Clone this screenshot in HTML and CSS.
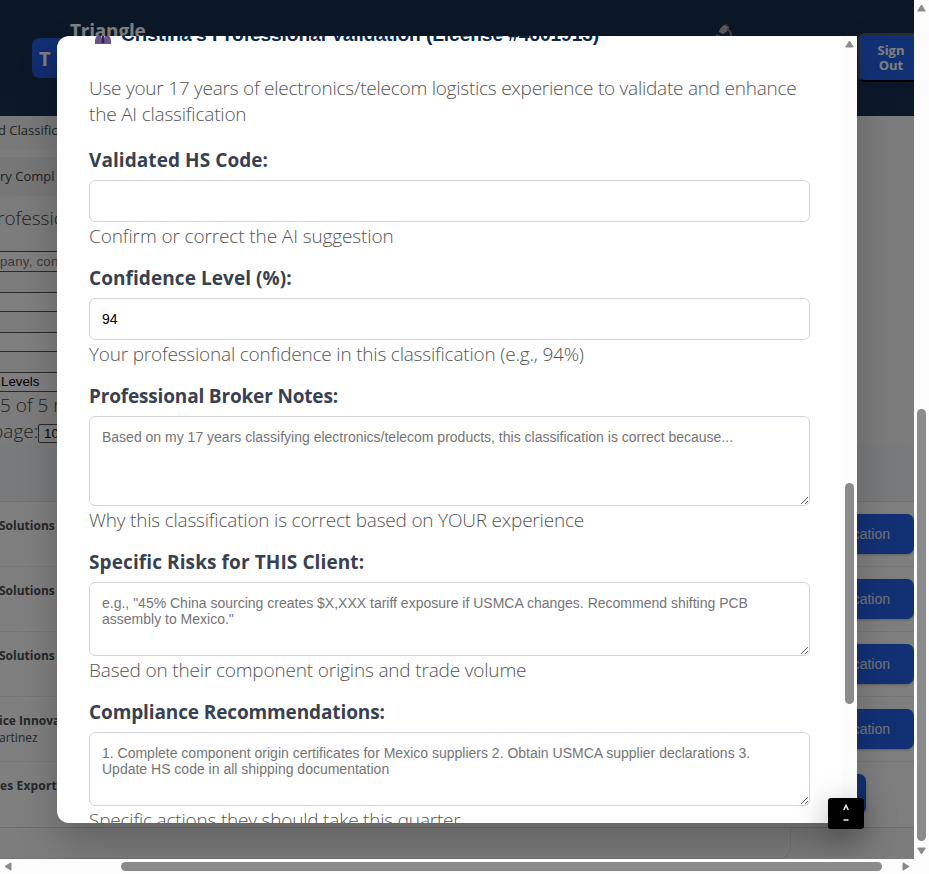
FILE: index.html
```html
<!DOCTYPE html>
<html lang="en">
<head>
<meta charset="utf-8">
<title>Triangle – Professional Validation</title>
<link rel="stylesheet" href="styles.css">
</head>
<body>
<div class="window">
  <div class="viewport">
    <header class="topbar">
      <div class="logo">T</div>
      <div class="brand">Triangle</div>
      <svg class="topicon" width="18" height="20" viewBox="0 0 18 20"><path d="M3 9Q4 4 9 1.500L13 4Q12 9 7 11Z" fill="#b8b4c2"/><path d="M9 1L12 3" stroke="#6b4a4a" stroke-width="2"/><path d="M11 6Q16 9 15 14" fill="none" stroke="#8b8590" stroke-width="2"/><path d="M0 11L5 13V16H0Z" fill="#3c9fc4"/></svg>
      <div class="signout">Sign Out</div>
    </header>
    <main class="page">
      <div class="tab tab-first"><span>d Classific</span></div>
      <div class="tab"><span>ry Compl</span></div>
      <div class="lead"><span>rofessic</span></div>
      <div class="filters">
        <div class="filter filter-search">pany, con</div>
        <div class="filter"></div>
        <div class="filter"></div>
        <div class="filter filter-level">Levels</div>
      </div>
      <div class="count">5 of 5 r</div>
      <div class="pager"><span>page:</span><div class="pagesize">10</div></div>
      <div class="thead"></div>
      <div class="row"><div class="client">Solutions</div><div class="action">cation</div></div>
      <div class="row"><div class="client">Solutions</div><div class="action">cation</div></div>
      <div class="row"><div class="client">Solutions</div><div class="action">cation</div></div>
      <div class="row"><div class="client">ice Innova<small>artinez</small></div><div class="action">cation</div></div>
      <div class="row row-last"><div class="client client-last">es Export</div><div class="action action-short"></div></div>
      <div class="cardfoot"></div>
    </main>
    <div class="overlay">
      <div class="modal">
        <div class="content">
          <h3 class="title"><svg class="person" width="16" height="10" viewBox="0 0 16 10"><path d="M0 10V6Q1 1 5 0H11Q15 1 16 6V10Z" fill="#6b5293"/><path d="M5 0L8 7L11 0Z" fill="#e4d9e9"/><path d="M7 1H9L9.5 9H6.5Z" fill="#3b2445"/></svg><span>Cristina's Professional Validation (License #4601913)</span></h3>
          <p class="intro"><span class="i1">Use your 17 years of electronics/telecom logistics experience to validate and enhance</span><br><span class="i2">the AI classification</span></p>
          <div class="field"><label class="l1">Validated HS Code:</label><input type="text"><p class="h1">Confirm or correct the AI suggestion</p></div>
          <div class="field"><label class="l2">Confidence Level (%):</label><input type="text" value="94"><p class="h2">Your professional confidence in this classification (e.g., 94%)</p></div>
          <div class="field"><label class="l3">Professional Broker Notes:</label><textarea class="tall" placeholder="Based on my 17 years classifying electronics/telecom products, this classification is correct because..."></textarea><p class="h3">Why this classification is correct based on YOUR experience</p></div>
          <div class="field"><label class="l4">Specific Risks for THIS Client:</label><textarea placeholder="e.g., &quot;45% China sourcing creates $X,XXX tariff exposure if USMCA changes. Recommend shifting PCB assembly to Mexico.&quot;"></textarea><p class="h4">Based on their component origins and trade volume</p></div>
          <div class="field"><label class="l5">Compliance Recommendations:</label><textarea placeholder="1. Complete component origin certificates for Mexico suppliers 2. Obtain USMCA supplier declarations 3. Update HS code in all shipping documentation"></textarea><p class="h5">Specific actions they should take this quarter</p></div>
        </div>
        <div class="mbar"><svg width="9" height="8" viewBox="0 0 9 8"><path d="M4.5 1L8.2 7H.8Z" fill="#8b8b8b" stroke="#8b8b8b" stroke-linejoin="round"/></svg><div class="mthumb"></div></div>
      </div>
    </div>
    <div class="badge"><svg width="36" height="31" viewBox="0 0 36 31"><path d="M15.7 12L18 7.500L20.3 12M15.500 22H20.500" fill="none" stroke="#eee" stroke-width="1.5"/></svg></div>
  </div>
  <div class="vbar"><svg width="9" height="8" viewBox="0 0 9 8"><path d="M4.5 1L8.2 7H.8Z" fill="#8b8b8b" stroke="#8b8b8b" stroke-linejoin="round"/></svg><div class="vthumb"></div><svg width="9" height="8" viewBox="0 0 9 8"><path d="M4.5 7L8.2 1H.8Z" fill="#8b8b8b" stroke="#8b8b8b" stroke-linejoin="round"/></svg></div>
  <div class="hbar"><svg width="8" height="9" viewBox="0 0 8 9"><path d="M1 4.5L7 .8V8.2Z" fill="#8b8b8b" stroke="#8b8b8b" stroke-linejoin="round"/></svg><div class="hthumb"></div><svg width="8" height="9" viewBox="0 0 8 9"><path d="M7 4.5L1 .8V8.2Z" fill="#8b8b8b" stroke="#8b8b8b" stroke-linejoin="round"/></svg></div>
</div>
</body>
</html>
```
FILE: styles.css
```css
* { box-sizing: border-box; }
body { margin: 0; overflow: hidden; font-family: "Segoe UI", "Open Sans", sans-serif; }
h3, p { margin: 0; }
svg { display: block; flex: none; }

.window { display: grid; grid-template: 859px 15px / 914px 15px; width: 929px; height: 874px; background: #fcfcfc; }
.viewport { position: relative; overflow: hidden; background: #fff; }

.topbar { display: flex; height: 116px; background: linear-gradient(#183050 0, #183050 50%, #183258 100%); }
.logo { flex: none; width: 40px; height: 40px; margin: 38px 0 0 32px; padding-left: 7px; border-radius: 8px; background: linear-gradient(135deg, #2563eb, #1d4ed8); color: #fff; font: 700 20px/42px "Open Sans", sans-serif; }
.brand { flex: none; width: 90px; margin: 17px 0 0 -2px; color: #fff; font: 700 19px/28px "Open Sans", sans-serif; letter-spacing: -.2px; }
.topicon { margin: 23px 0 0 556px; }
.signout { flex: none; width: 70px; height: 49px; margin: 33px 0 0 124px; padding: 8px 11px 0 7px; border: 2px solid #555; border-color: #555 #555 #000; border-radius: 6px; background: #2563eb; color: #fff; font: 700 13px/15px "Open Sans", sans-serif; text-align: center; }

.page { background: #f8f8f8; white-space: nowrap; }
.tab { width: 140px; height: 39px; background: #efefef; color: #444; font-size: 13px; line-height: 38px; }
.tab-first { height: 33px; margin-bottom: 8px; background: #f3f3f3; line-height: 28px; }
.tab-first span { margin-left: -2px; }
.lead { height: 55px; font-size: 19px; font-weight: 300; line-height: 45px; color: #444; }
.lead span { margin-left: -3px; }
.filters { display: grid; gap: 20px; }
.filter { width: 140px; height: 20px; border: solid #555; border-width: 1px 0; background: #fff; font: 13.3px/20px "Liberation Sans", sans-serif; color: #757575; }
.filter-search { height: 21px; letter-spacing: .2px; }
.filter-level { color: #000; padding-left: 1px; line-height: 18px; }
.count { height: 27px; font-size: 19px; font-weight: 300; line-height: 26px; color: #444; }
.pager { display: flex; height: 24px; font-size: 19px; font-weight: 300; line-height: 24px; color: #444; }
.pager span { width: 39px; margin-left: -8px; flex: none; }
.pagesize { width: 50px; height: 19px; margin: 5px 0 0 7px; padding-left: 5px; border: 1px solid #555; border-radius: 2px; background: #fff; font: 13.3px/18px "Liberation Sans", sans-serif; color: #000; }
.thead { height: 59px; background: #f1f4f8; border-bottom: 1px solid #dde1e6; }
.row { display: flex; justify-content: space-between; height: 65px; border-bottom: 1px solid #ececec; background: #fff; }
.row-last { height: 66px; border-color: #ddd; }
.client { padding-top: 15px; margin-left: -1px; color: #4a4d55; font-size: 12px; font-weight: 700; line-height: 18px; }
.client small { display: block; font-size: 12px; font-weight: 400; line-height: 16px; }
.client-last { margin-left: 0; letter-spacing: .15px; }
.action { width: 90px; height: 40px; margin-top: 12px; padding-right: 24px; border-radius: 7px; background: #2563eb; box-shadow: 0 1px 3px rgba(0,0,0,.25); color: #e5e7eb; font: 14px/40px "Liberation Sans", sans-serif; text-align: right; }
.action-short { margin-right: 48px; }
.cardfoot { width: 791px; height: 31px; border: solid #e4e4e4; border-width: 0 1px 1px 0; border-radius: 0 0 12px 0; background: #fafafa; }

.overlay { position: absolute; inset: 0; display: flex; padding: 36px 57px; background: rgba(0,0,0,.5); }
.modal { display: flex; width: 800px; height: 787px; overflow: hidden; border-radius: 12px 0 0 12px; background: #fff; box-shadow: 0 20px 40px rgba(0,0,0,.22); }
.content { width: 785px; padding: 0 32px; }
.title { display: flex; height: 39px; margin-top: -14px; gap: 10px; padding-left: 6px; color: #0b2748; font: 700 19.2px/26px "Liberation Sans", sans-serif; letter-spacing: -.1px; white-space: nowrap; }
.title .person { margin-top: 12px; }
.intro { height: 72px; margin-top: 14px; color: #555; font-size: 19px; font-weight: 300; line-height: 26px; white-space: nowrap; }
.field { height: 118px; }
.field:nth-child(5) { height: 166px; }
.field:nth-child(6) { height: 150px; }
label { display: block; height: 33px; color: #374151; font-size: 19px; font-weight: 700; line-height: 26px; }
input, textarea { display: block; width: 721px; height: 42px; margin: 0; padding: 12px; border: 1px solid #d1d5db; border-radius: 6px; background: #fff; font: 14px/16px "Liberation Sans", sans-serif; color: #000; }
textarea { height: 74px; resize: both; }
textarea.tall { height: 90px; }
textarea::placeholder { color: #757575; }
.field p { height: 26px; padding-top: 1px; color: #555; font-size: 19px; font-weight: 300; line-height: 26px; white-space: nowrap; }

/* Per-line tracking */
.i1 { letter-spacing: -.24px; }
.i2, .h3, .h5 { letter-spacing: -.2px; }
.h1 { letter-spacing: -.11px; }
.h2 { letter-spacing: -.2px; }
.h4 { letter-spacing: -.17px; }
.l1, .l2 { letter-spacing: .07px; }
.l3 { letter-spacing: -.17px; }
.l4 { letter-spacing: .1px; }
.l5 { letter-spacing: -.12px; }

.mbar { display: flex; flex-direction: column; width: 15px; padding: 4px 3px; background: #fcfcfc; }
.mthumb { width: 9px; height: 221px; margin-top: 435px; border-radius: 5px; background: #8b8b8b; }
.badge { position: absolute; left: 828px; top: 798px; width: 36px; height: 31px; border-radius: 3px; background: #000; box-shadow: 0 8px 32px rgba(0,0,0,.35); }
.vbar { display: flex; flex-direction: column; padding: 4px 3px; }
.vthumb { width: 9px; height: 433px; margin: 397px 0 6px; border-radius: 5px; background: #8b8b8b; }
.hbar { display: flex; padding: 3px 4px; }
.hthumb { width: 761px; height: 9px; margin: 0 20px 0 109px; border-radius: 5px; background: #8b8b8b; }
```
